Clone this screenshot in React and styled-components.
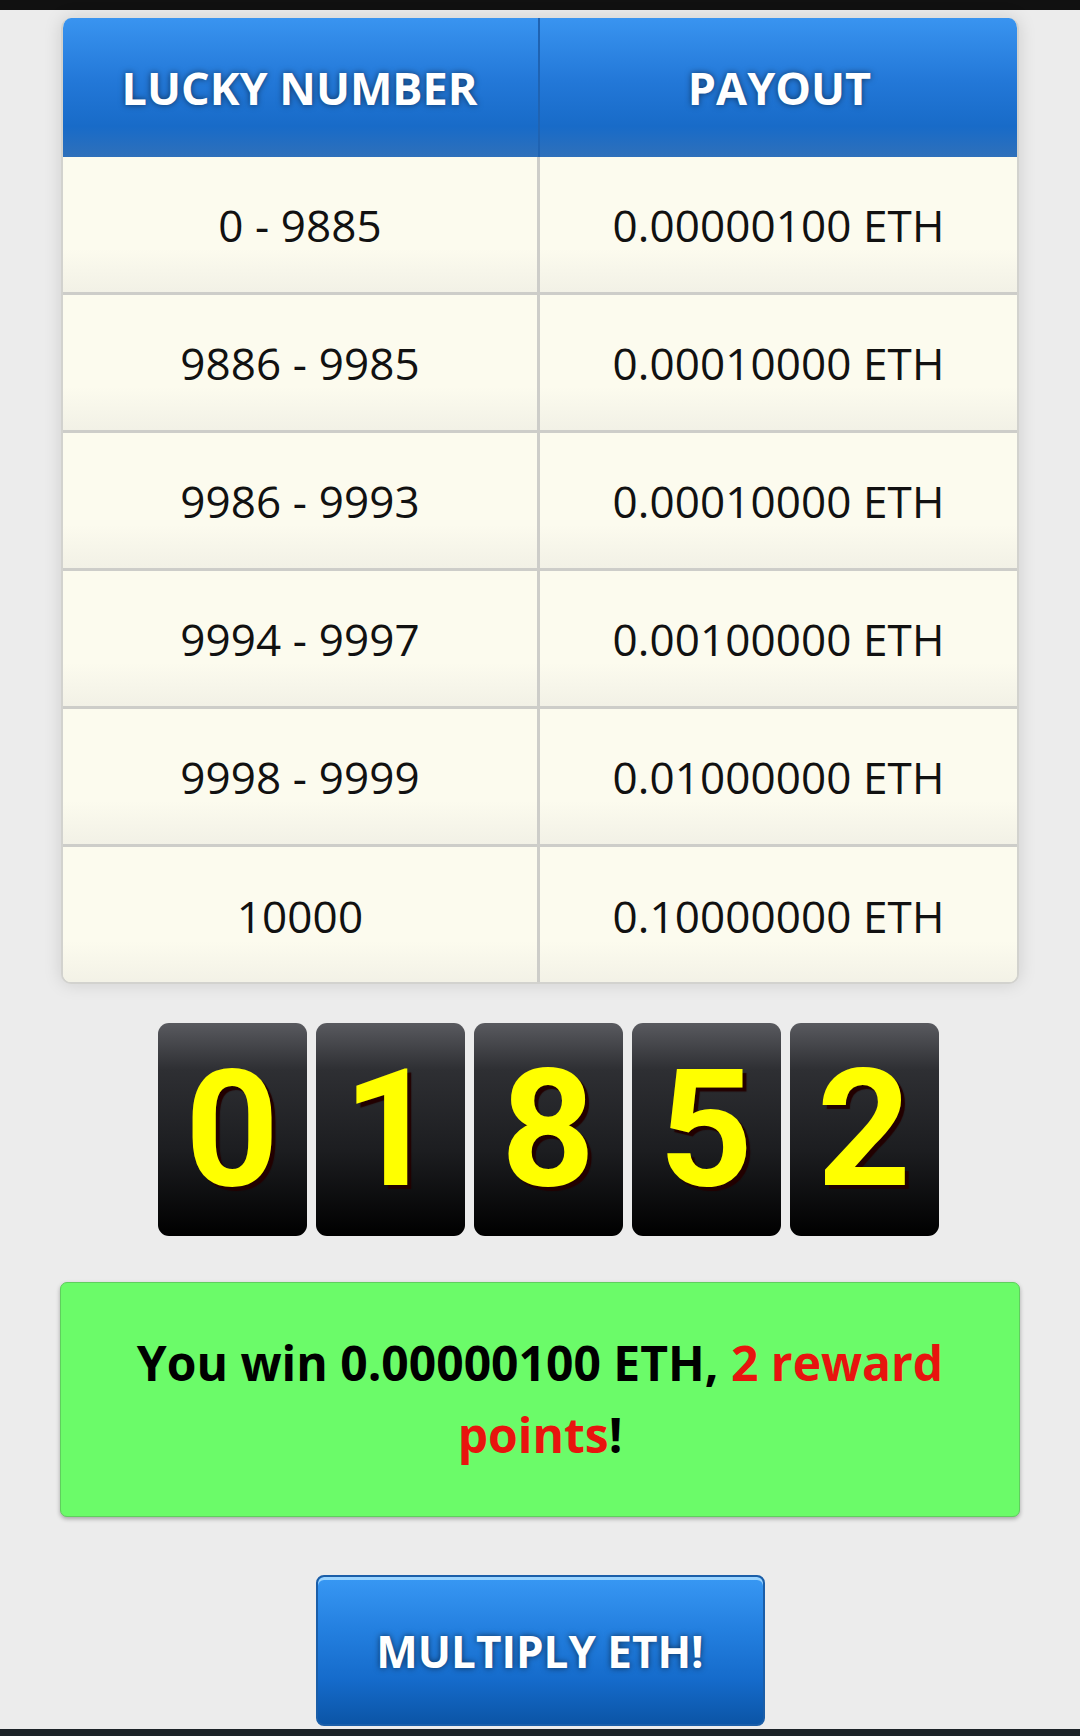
import React from 'react'
import styled, { createGlobalStyle } from 'styled-components'

const rows = [
  ['0 - 9885', '0.00000100 ETH'],
  ['9886 - 9985', '0.00010000 ETH'],
  ['9986 - 9993', '0.00010000 ETH'],
  ['9994 - 9997', '0.00100000 ETH'],
  ['9998 - 9999', '0.01000000 ETH'],
  ['10000', '0.10000000 ETH'],
]

const rolled = ['0', '1', '8', '5', '2']

export default () => (
  <$page>
    <Global />
    <TopBar />
    <Table>
      <HeadCell>LUCKY NUMBER</HeadCell>
      <HeadCell last>PAYOUT</HeadCell>
      {rows.map(([range, payout], i) => (
        <React.Fragment key={range}>
          <Cell bottom={i === rows.length - 1}>{range}</Cell>
          <Cell last bottom={i === rows.length - 1}>{payout}</Cell>
        </React.Fragment>
      ))}
    </Table>
    <Digits>
      {rolled.map((d, i) => <Digit key={i}>{d}</Digit>)}
    </Digits>
    <WinBox>
      You win 0.00000100 ETH, <Red>2 reward points</Red>!
    </WinBox>
    <ButtonRow>
      <Multiply>MULTIPLY ETH!</Multiply>
    </ButtonRow>
    <BottomBar />
  </$page>
)

const Global = createGlobalStyle`
  html, body {
    margin: 0;
    padding: 0;
    background: #ececec;
    overflow: hidden;
  }
  * { box-sizing: border-box; }
`

const $page = styled.div`
  display: flex;
  flex-direction: column;
  width: 1080px;
  height: 1736px;
  background: #ececec;
  font-family: "Open Sans", "Noto Sans", sans-serif;
`

const TopBar = styled.div`
  height: 10px;
  background: #111;
`

const BottomBar = styled.div`
  height: 7px;
  margin-top: 3px;
  background: #1c2227;
`

const Table = styled.div`
  display: grid;
  grid-template-columns: 1fr 1fr;
  grid-template-rows: 139px repeat(6, 138px);
  margin: 8px 61px 0;
  height: 966px;
  border-radius: 10px;
  overflow: hidden;
  background: #fcfbee;
  border: 2px solid #d2d2ce;
  border-top: none;
  box-shadow: 0 0 18px rgba(0, 0, 0, 0.13);
`

const HeadCell = styled.div`
  display: flex;
  align-items: center;
  justify-content: center;
  margin: 0 ${p => (p.last ? '-2px 0 0' : '0 0 -2px')};
  background: linear-gradient(#3994f0 0%, #2378d8 45%, #186bc8 78%, #2f70ba 100%);
  border-right: ${p => (p.last ? 'none' : '2px solid #1f63b2')};
  color: #fff;
  font-weight: 700;
  font-size: 45px;
  text-shadow: 0 0 6px rgba(0, 0, 0, 0.55);
`

const Cell = styled.div`
  display: flex;
  align-items: center;
  justify-content: center;
  background: linear-gradient(#fcfbee 0%, #fcfbee 68%, #f2f1e6 100%);
  border-right: ${p => (p.last ? 'none' : '3px solid #cdcdc9')};
  border-bottom: ${p => (p.bottom ? 'none' : '3px solid #cdcdc9')};
  color: #111;
  font-size: 44px;
  letter-spacing: 0.1px;
`

const Digits = styled.div`
  display: flex;
  justify-content: center;
  gap: 9px;
  margin-top: 39px;
  padding-left: 16px;
`

const Digit = styled.div`
  width: 149px;
  height: 213px;
  border-radius: 11px;
  background: linear-gradient(#595a5f 0%, #2e2f33 22%, #1c1d20 60%, #000 100%);
  color: #ffff00;
  font-family: Roboto, "Liberation Sans", sans-serif;
  font-weight: 700;
  font-size: 164px;
  line-height: 213px;
  text-align: center;
  text-shadow: 4px 4px 1px #220000;
`

const WinBox = styled.div`
  margin: 46px 60px 0;
  height: 235px;
  padding: 44px 30px 0;
  background: #6bfb69;
  border: 1px solid #5fcf5d;
  border-radius: 7px;
  box-shadow: 0 2px 4px rgba(0, 0, 0, 0.3);
  color: #000;
  font-weight: 700;
  font-size: 48px;
  line-height: 72px;
  text-align: center;
`

const Red = styled.span`
  color: #e8140e;
`

const ButtonRow = styled.div`
  display: flex;
  justify-content: center;
  margin-top: 58px;
`

const Multiply = styled.button`
  width: 449px;
  height: 151px;
  border: 2px solid #1b5ea8;
  border-radius: 8px;
  background: linear-gradient(#3898f4 0%, #2480e0 35%, #156bcb 70%, #0b55a6 100%);
  box-shadow: inset 0 3px 0 #9ad4ff;
  color: #fff;
  font-family: "Open Sans", "Noto Sans", sans-serif;
  font-weight: 700;
  font-size: 44px;
  text-shadow: 0 0 6px rgba(0, 0, 0, 0.6);
  cursor: pointer;
`
